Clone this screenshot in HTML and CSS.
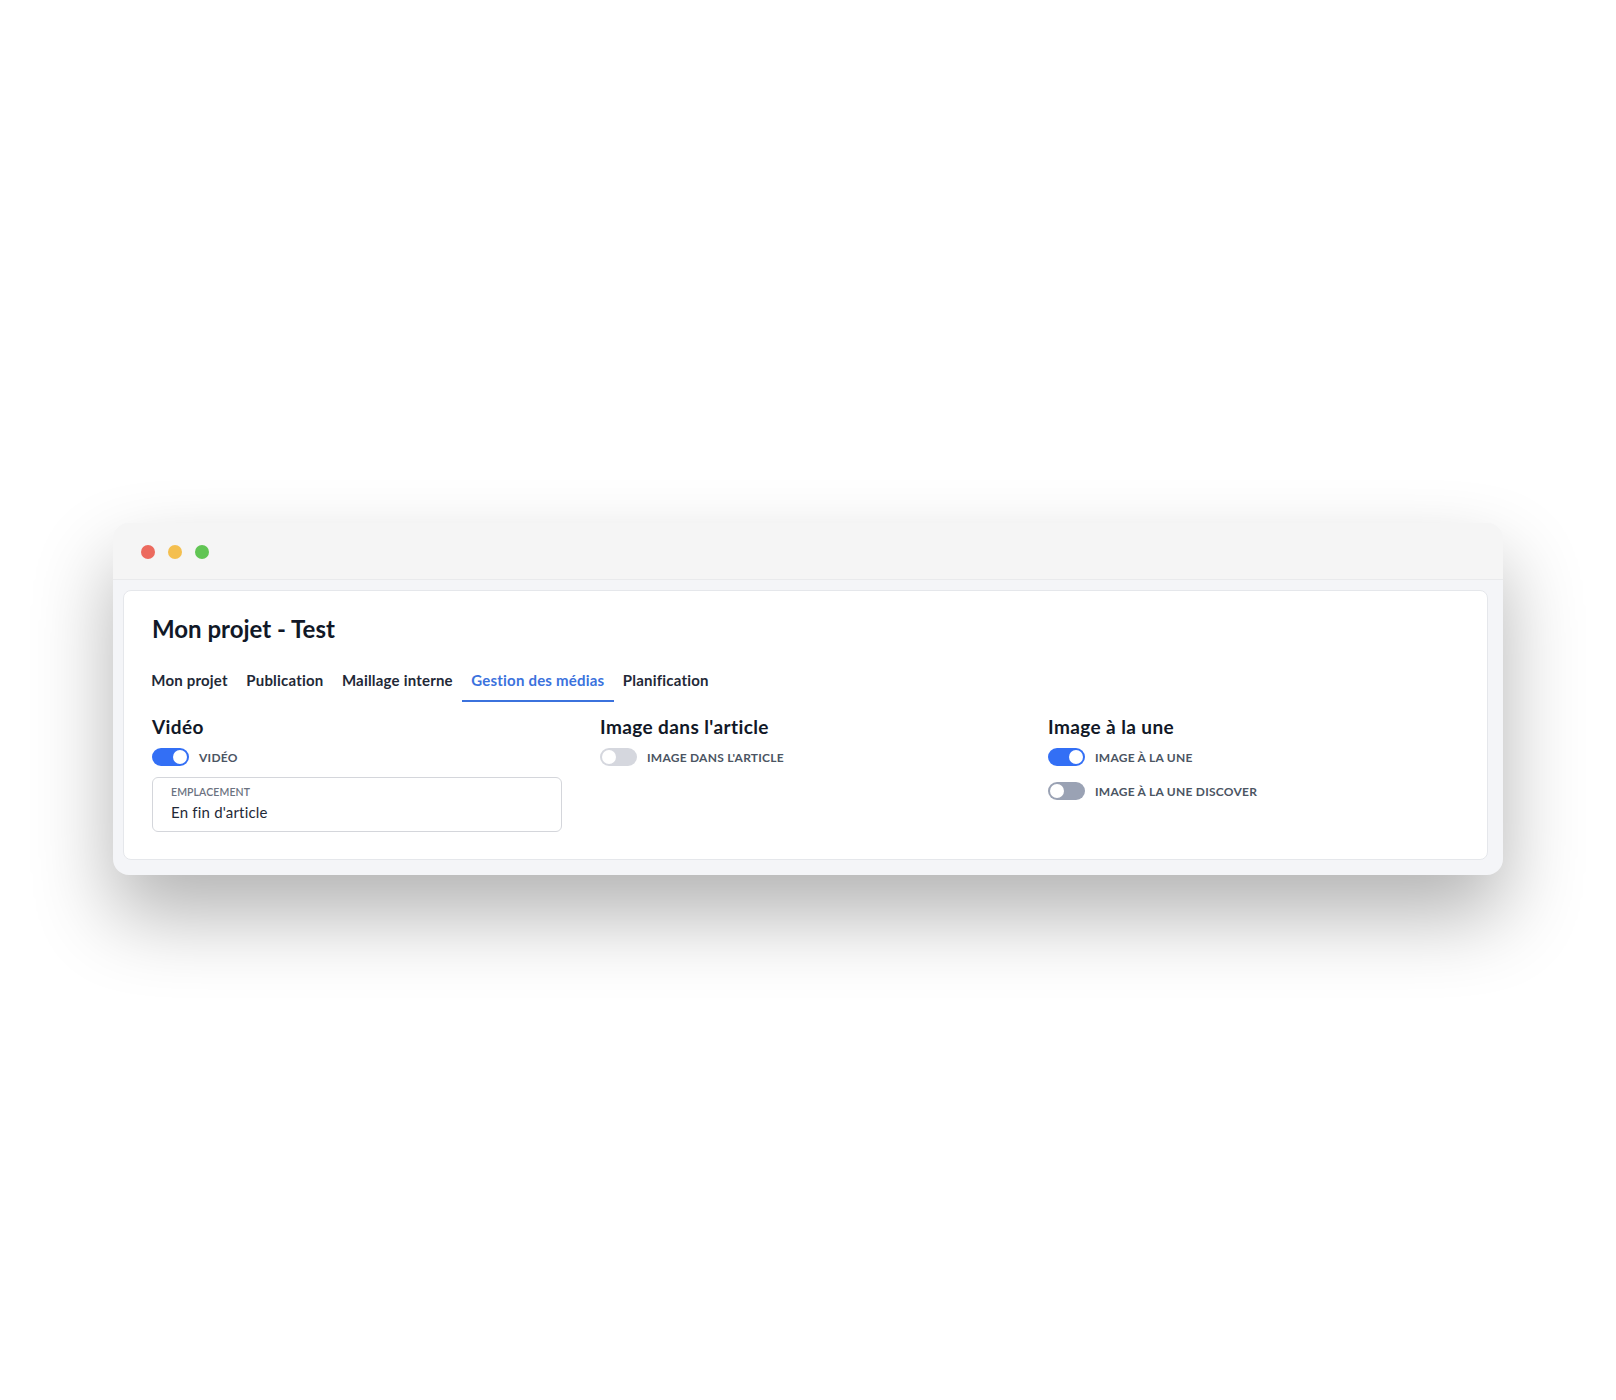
FILE: index.html
```html
<!DOCTYPE html>
<html lang="fr">
<head>
  <meta charset="UTF-8" />
  <meta name="viewport" content="width=device-width, initial-scale=1.0"/>
  <title>Mon projet - Test</title>
  <link rel="stylesheet" href="styles.css">
</head>

<body>

  <!-- FENETRE -->
  <div class="window">
    <div class="titlebar">
      <span class="dot dot-red"></span>
      <span class="dot dot-yellow"></span>
      <span class="dot dot-green"></span>
    </div>

    <div class="frame">
      <div class="card">
        <h1 class="title">Mon projet - Test</h1>

        <!-- ONGLETS -->
        <div class="tabs">
          <div class="tab">Mon projet</div>
          <div class="tab">Publication</div>
          <div class="tab">Maillage interne</div>
          <div class="tab active">Gestion des médias</div>
          <div class="tab">Planification</div>
        </div>

        <!-- MEDIAS -->
        <div class="sections">
          <div class="section">
            <h2>Vidéo</h2>
            <label class="switch-row">
              <span class="switch on"></span>
              <span class="switch-label">Vidéo</span>
            </label>
            <div class="field">
              <div class="field-label">Emplacement</div>
              <div class="field-value">En fin d'article</div>
            </div>
          </div>

          <div class="section">
            <h2>Image dans l'article</h2>
            <label class="switch-row">
              <span class="switch"></span>
              <span class="switch-label">Image dans l'article</span>
            </label>
          </div>

          <div class="section">
            <h2>Image à la une</h2>
            <label class="switch-row">
              <span class="switch on"></span>
              <span class="switch-label">Image à la une</span>
            </label>
            <label class="switch-row">
              <span class="switch dark"></span>
              <span class="switch-label">Image à la une Discover</span>
            </label>
          </div>
        </div>
      </div>
    </div>
  </div>

</body>
</html>
```

FILE: styles.css
```css
body {
  margin: 0;
  padding: 0;
  min-height: 100vh;
  display: flex;
  justify-content: center;
  align-items: center;
  background-color: white;
  font-family: 'Lato', 'Noto Sans', sans-serif;
  color: #111827;
}

.window {
  width: 1390px;
  margin-top: -2px;
  background-color: #f4f5f8;
  border-radius: 16px;
  box-shadow: 0 40px 80px rgba(0, 0, 0, 0.3);
  overflow: hidden;
}

.titlebar {
  height: 54px;
  background-color: #f5f5f5;
  border-bottom: 1px solid #e9eaec;
  display: flex;
  align-items: center;
  gap: 13px;
  padding: 2px 0 0 28px;
}

.dot {
  width: 14px;
  height: 14px;
  border-radius: 50%;
}

.dot-red { background-color: #ec6a5e; }
.dot-yellow { background-color: #f4bf4f; }
.dot-green { background-color: #61c554; }

.frame {
  padding: 10px 15px 15px 10px;
}

.card {
  background-color: white;
  border: 1px solid #e5e7eb;
  border-radius: 8px;
  padding: 22px 28px 27px 28px;
}

.title {
  margin: 0;
  font-size: 24px;
  line-height: 32px;
  font-weight: 700;
  color: #111827;
}

.tabs {
  display: flex;
  margin: 25px 0 0 -10px;
}

.tab {
  font-size: 15px;
  line-height: 20px;
  font-weight: 700;
  letter-spacing: 0.2px;
  color: #1f2937;
  padding: 0 9.25px 10px 9.25px;
  border-bottom: 2px solid transparent;
  cursor: pointer;
}

.tab.active {
  color: #3b72dd;
  border-bottom-color: #3b72dd;
}

.sections {
  display: grid;
  grid-template-columns: repeat(3, 1fr);
  gap: 37px;
  margin-top: 13px;
}

.section h2 {
  margin: 0 0 6px 0;
  font-size: 19px;
  line-height: 24px;
  font-weight: 700;
  letter-spacing: 0.4px;
  color: #111827;
}

.switch-row {
  display: flex;
  align-items: center;
  height: 24px;
  margin-bottom: 10px;
  cursor: pointer;
}

.switch {
  position: relative;
  width: 37px;
  height: 18px;
  border-radius: 9px;
  background-color: #d5d7de;
  flex-shrink: 0;
}

.switch::after {
  content: "";
  position: absolute;
  top: 2px;
  left: 2px;
  width: 14px;
  height: 14px;
  border-radius: 50%;
  background-color: white;
}

.switch.on {
  background-color: #336ff5;
}

.switch.on::after {
  left: 21px;
}

.switch.dark {
  background-color: #9aa2b4;
}

.switch-label {
  margin-left: 10px;
  font-size: 12px;
  font-weight: 700;
  letter-spacing: 0.25px;
  text-transform: uppercase;
  color: #4b5563;
}

.field {
  width: 410px;
  box-sizing: border-box;
  margin-top: -2px;
  border: 1px solid #d4d6db;
  border-radius: 6px;
  padding: 7px 18px 9px 18px;
}

.field-label {
  font-size: 10.5px;
  line-height: 14px;
  font-weight: 600;
  letter-spacing: 0.1px;
  text-transform: uppercase;
  color: #6b7280;
}

.field-value {
  margin-top: 3px;
  font-size: 15px;
  line-height: 20px;
  letter-spacing: 0.2px;
  color: #1f2937;
}
```
